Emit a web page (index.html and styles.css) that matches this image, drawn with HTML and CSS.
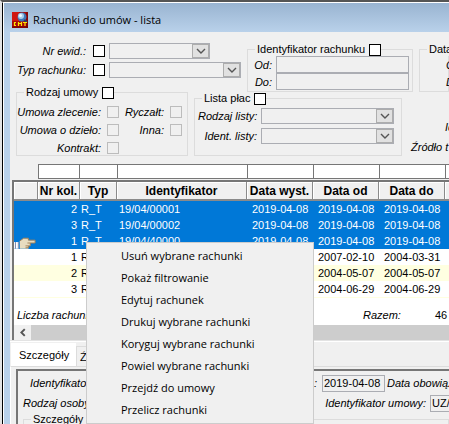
FILE: index.html
```html
<!DOCTYPE html>
<html lang="pl">
<head>
<meta charset="utf-8">
<title>Rachunki do umów - lista</title>
<link rel="stylesheet" href="styles.css">
</head>
<body>
<svg class="defs" width="0" height="0" aria-hidden="true">
  <symbol id="chevron" viewBox="0 0 10 6"><path d="M1 1l4 4 4-4" fill="none" stroke="#555" stroke-width="1.4"/></symbol>
</svg>
<div class="window">
  <header class="titlebar">
    <svg class="logo" viewBox="0 0 16 16" aria-hidden="true">
      <rect width="16" height="16" fill="#a80808"/>
      <path d="M0 0h7v9H0z" fill="#d01510"/>
      <path d="M0 15h16M15 0v16" stroke="#600" fill="none"/>
      <circle cx="10" cy="5" r="4.5" fill="#3f78b8"/>
      <circle cx="9" cy="4" r="3" fill="#a9cdec"/>
      <circle cx="8.500" cy="3.500" r="1.500" fill="#f2f9ff"/>
      <path d="M12 8l3 2" stroke="#28436e" stroke-width="2"/>
      <path d="M4 10.500H2.500v3H4M6.500 14v-4M9.500 14v-4M6.500 11.500h3M11 10.500h4M13 10.500V14" stroke="#ffe500" stroke-width="1.200" fill="none"/>
    </svg>
    <h1>Rachunki do umów - lista</h1>
  </header>
  <main class="content">
    <form class="filters">
      <div class="basic">
        <div class="line">
          <label for="nr">Nr ewid.:</label>
          <input type="checkbox" id="nr">
          <span class="combo combo-short"><select aria-label="Nr ewid." disabled><option></option></select><span class="drop"><svg><use href="#chevron"/></svg></span></span>
        </div>
        <div class="line">
          <label for="typ">Typ rachunku:</label>
          <input type="checkbox" id="typ">
          <span class="combo"><select aria-label="Typ rachunku" disabled><option></option></select><span class="drop"><svg><use href="#chevron"/></svg></span></span>
        </div>
      </div>
      <fieldset class="ident">
        <legend><label for="idr">Identyfikator rachunku</label><input type="checkbox" id="idr"></legend>
        <div class="pair"><label for="od">Od:</label><input type="text" id="od" disabled></div>
        <div class="pair"><label for="do">Do:</label><input type="text" id="do" disabled></div>
      </fieldset>
      <fieldset class="dates">
        <legend>Data</legend>
        <div class="pair"><label for="dod">Od:</label><input type="text" id="dod" disabled></div>
        <div class="pair"><label for="ddo">Do:</label><input type="text" id="ddo" disabled></div>
      </fieldset>
      <fieldset class="contract">
        <legend><label for="ru">Rodzaj umowy</label><input type="checkbox" id="ru"></legend>
        <div class="kinds">
          <label for="uz">Umowa zlecenie:</label><input type="checkbox" id="uz" disabled>
          <label for="ry">Ryczałt:</label><input type="checkbox" id="ry" disabled>
          <label for="ud">Umowa o dzieło:</label><input type="checkbox" id="ud" disabled>
          <label for="in">Inna:</label><input type="checkbox" id="in" disabled>
          <label for="ko">Kontrakt:</label><input type="checkbox" id="ko" disabled>
        </div>
      </fieldset>
      <fieldset class="payroll">
        <legend><label for="lp">Lista płac</label><input type="checkbox" id="lp"></legend>
        <div class="line"><label for="rl">Rodzaj listy:</label><span class="combo"><select id="rl" disabled><option></option></select><span class="drop"><svg><use href="#chevron"/></svg></span></span></div>
        <div class="line"><label for="il">Ident. listy:</label><span class="combo"><select id="il" disabled><option></option></select><span class="drop"><svg><use href="#chevron"/></svg></span></span></div>
      </fieldset>
      <div class="source">
        <span class="source-id">Id</span>
        <span>Źródło t</span>
      </div>
    </form>

    <div class="column-filters">
      <input type="text" aria-label="Filtr Nr kol."><input type="text" aria-label="Filtr Typ"><input type="text" aria-label="Filtr Identyfikator"><input type="text" aria-label="Filtr Data wyst."><input type="text" aria-label="Filtr Data od"><input type="text" aria-label="Filtr Data do"><input type="text" aria-label="Filtr">
    </div>
    <section class="list">
      <table>
        <colgroup><col class="c-mark"><col class="c-num"><col class="c-type"><col class="c-id"><col class="c-date"><col class="c-date"><col class="c-date"><col class="c-rest"></colgroup>
        <thead><tr><th></th><th>Nr kol.</th><th>Typ</th><th>Identyfikator</th><th>Data wyst.</th><th>Data od</th><th>Data do</th><th></th></tr></thead>
        <tbody>
          <tr class="selected"><td></td><td>2</td><td>R_T</td><td>19/04/00001</td><td>2019-04-08</td><td>2019-04-08</td><td>2019-04-08</td><td></td></tr>
          <tr class="selected"><td></td><td>3</td><td>R_T</td><td>19/04/00002</td><td>2019-04-08</td><td>2019-04-08</td><td>2019-04-08</td><td></td></tr>
          <tr class="selected"><td class="mark"><svg class="hand" viewBox="0 0 24 12" aria-hidden="true"><path d="M0 5h5v7H0z" fill="#fff"/><path d="M1.500 5v7M4.500 5v7" stroke="#7182a8"/><path d="M6 4l4-3h5v2h7v3h-5v3h-2v3H6z" fill="#e8dcc0"/><path d="M6 4l4-3h5v2h7v3h-8M17 6v3h-5M15 9v2h-3" fill="none" stroke="#a08058"/></svg></td><td>1</td><td>R_T</td><td>19/04/40000</td><td>2019-04-08</td><td>2019-04-08</td><td>2019-04-08</td><td></td></tr>
          <tr><td></td><td>1</td><td>R_T</td><td></td><td></td><td>2007-02-10</td><td>2004-03-31</td><td></td></tr>
          <tr class="alt"><td></td><td>2</td><td>R_T</td><td></td><td></td><td>2004-05-07</td><td>2004-05-07</td><td></td></tr>
          <tr><td></td><td>3</td><td>R_T</td><td></td><td></td><td>2004-06-29</td><td>2004-06-29</td><td></td></tr>
        </tbody>
      </table>
      <div class="summary"><em>Liczba rachunków:</em><em class="total">Razem:</em><span>46</span></div>
      <div class="scrollbar"><button type="button" aria-label="Przewiń w lewo"><svg viewBox="0 0 6 8"><path d="M5 1L2 4l3 3" fill="none" stroke="#555" stroke-width="1.700"/></svg></button><span class="thumb"></span></div>
    </section>

    <nav class="tabs"><button type="button" class="active">Szczegóły</button><button type="button">Źródło</button></nav>
    <section class="details">
      <div class="panel">
        <div class="detail-row first">
          <span class="caption">Identyfikator:</span>
          <label class="issued" for="dw">Data wyst.:</label>
          <input class="date" type="text" id="dw" value="2019-04-08">
          <span class="due">Data obowiązku</span>
        </div>
        <div class="detail-row">
          <span class="caption">Rodzaj osoby:</span>
          <label class="contract-id" for="iu">Identyfikator umowy:</label>
          <input class="number" type="text" id="iu" value="UZ/">
        </div>
        <fieldset class="more"><legend>Szczegóły rachunku</legend></fieldset>
      </div>
    </section>
  </main>
</div>
<menu class="context-menu">
  <li><button type="button">Usuń wybrane rachunki</button></li>
  <li><button type="button">Pokaż filtrowanie</button></li>
  <li><button type="button">Edytuj rachunek</button></li>
  <li><button type="button">Drukuj wybrane rachunki</button></li>
  <li><button type="button">Koryguj wybrane rachunki</button></li>
  <li><button type="button">Powiel wybrane rachunki</button></li>
  <li><button type="button">Przejdź do umowy</button></li>
  <li><button type="button">Przelicz rachunki</button></li>
</menu>
</body>
</html>
```
FILE: styles.css
```css
* { box-sizing: border-box; }
html { height: 100%; overflow: hidden; }
body {
  margin: 0;
  height: 100%;
  overflow: hidden;
  border-top: 2px solid #555;
  border-left: 2px solid #e4e4e4;
  background: #f0f0f0;
  color: #000;
  font: 11px/16px "Liberation Sans", Arial, sans-serif;
  white-space: nowrap;
}
input, select, button { font: inherit; color: inherit; margin: 0; padding: 0; border-radius: 0; }
button { border: 0; background: none; }
.defs { position: absolute; }

/* Window frame */
.window {
  display: flex;
  flex-direction: column;
  height: 100%;
  overflow: hidden;
  padding-left: 6px;
  border-left: 1px solid #000;
  border-top: 1px solid #fff;
  box-shadow: inset 1px 0 #fff;
  background: #b9d1ea;
}
.titlebar {
  display: flex;
  flex: none;
  align-items: center;
  gap: 5px;
  height: 29px;
  margin-left: -5px;
  padding: 5px 0 0 8px;
  background: linear-gradient(#99b4d1, #b9d1ea);
}
.logo { width: 16px; height: 16px; }
h1 { margin: 0; font: 11px/16px "Open Sans", "Noto Sans", sans-serif; }
.content { flex: 1; min-height: 0; margin-left: 1px; padding-top: 11px; background: #f0f0f0; overflow: hidden; }

/* Shared controls */
label, em { font-style: italic; }
input[type="checkbox"] {
  appearance: none;
  flex: none;
  width: 12px;
  height: 12px;
  border: 1px solid #000;
  background: #fff;
}
input[type="checkbox"]:disabled { border-color: #bcbcbc; background: transparent; }
.combo {
  display: flex;
  flex: 1;
  height: 16px;
  border: 1px solid #abadb3;
}
.combo select { appearance: none; flex: 1; min-width: 0; border: 0; background: transparent; }
.drop {
  display: grid;
  place-items: center;
  width: 17px;
  border: 1px solid #adadad;
  background: #e1e1e1;
}
.drop svg { width: 10px; height: 6px; }
.line { display: flex; align-items: center; }

/* Fieldsets */
fieldset { min-width: 0; margin: 0; padding: 0; border: 1px solid #dcdcdc; }
legend { display: flex; align-items: center; gap: 4px; height: 13px; margin-left: 7px; padding: 0 0 0 2px; line-height: 13px; }
legend label { font-style: normal; }

/* Filters */
.filters {
  display: grid;
  grid-template-columns: 178px 53px 160px 12px 1fr;
  grid-template-rows: 43px 6px 4px 60px;
  padding-left: 6px;
  overflow: hidden;
}
.basic { grid-area: 1 / 1 / 2 / 3; display: grid; gap: 3px; align-content: start; margin: 0 6px 0 -6px; }
.basic .line label { width: 76px; text-align: right; }
.basic .line input { margin: 0 4px 0 7px; }
.basic .combo-short { margin-right: 31px; }
.ident { grid-area: 1 / 3 / 3 / 5; margin-right: 6px; }
.dates { grid-area: 1 / 5 / 3 / 6; }
.pair { display: flex; align-items: center; gap: 4px; height: 17px; padding: 0 3px; }
.pair label { width: 21px; text-align: right; }
.pair input { flex: 1; min-width: 0; height: 17px; border: 1px solid #abadb3; background: transparent; }
.dates .pair label { width: auto; margin-left: 23px; }
.contract { grid-area: 2 / 1 / 5 / 2; margin-right: 6px; }
.kinds {
  display: grid;
  grid-template-columns: 84px 12px 39px 12px;
  grid-auto-rows: 18px;
  column-gap: 6px;
  align-items: center;
  justify-items: end;
  margin-top: 4px;
}
.payroll { grid-area: 3 / 2 / 5 / 4; margin-right: 5px; }
.payroll .line { gap: 4px; height: 16px; margin: 3px 7px 4px 3px; }
.payroll .line label { width: 59px; text-align: right; }
.source { grid-area: 4 / 4 / 5 / 6; display: grid; gap: 4px; align-content: end; padding: 0 0 1px 4px; font-style: italic; }
.source-id { margin-left: 34px; }

/* Column filter boxes */
.column-filters {
  display: grid;
  grid-template-columns: 42px 38px 130px 66px 66px 66px 120px;
  margin: 8px 0 0 28px;
}
.column-filters input { min-width: 0; height: 15px; border: 1px solid #767676; background: #fff; }
.column-filters input + input { margin-left: -1px; }

/* Table */
.list { margin: 1px 0 0 2px; border: solid #767676; border-width: 2px 0 0 2px; background: #fff; }
table { table-layout: fixed; width: 560px; border-collapse: separate; border-spacing: 0; }
.c-mark { width: 24px; }
.c-num { width: 42px; }
.c-type { width: 37px; }
.c-id { width: 130px; }
.c-date { width: 66px; }
th, td { padding: 0; overflow: hidden; }
th {
  height: 19px;
  border: solid #8a8a8a;
  border-width: 0 1px 2px 0;
  box-shadow: inset 1px 1px #fff;
  background: #f0f0f0;
  font: bold 12px/16px "Liberation Sans", Arial, sans-serif;
}
td { height: 16px; padding-left: 5px; line-height: 16px; }
td:nth-child(2) { padding: 0 3px 0 0; text-align: right; }
td:nth-child(3) { padding-left: 1px; }
td:nth-child(4) { padding-left: 2px; }
td.mark { padding: 0; }
.hand { display: block; width: 23px; height: 12px; margin-top: 4px; }
.selected { background: #0078d7; color: #fff; }
.alt { background: #ffffe1; }
.summary { display: flex; align-items: center; height: 28px; padding: 6px 0 0 3px; border-top: 1px solid #ffffe1; }
.summary em:first-child { width: 346px; }
.total { width: 72px; }
.scrollbar { display: flex; height: 15px; }
.scrollbar button { display: grid; place-items: center; width: 17px; background: #f0f0f0; }
.scrollbar svg { width: 7px; height: 9px; }
.thumb { flex: 1; background: #cdcdcd; }

/* Details */
.tabs { display: flex; align-items: flex-end; height: 26px; padding-left: 1px; border-top: 1px solid #e3e3e3; box-shadow: inset 0 1px #fff; }
.tabs button { height: 20px; padding: 0 7px; border: 1px solid #dcdcdc; border-bottom: 0; }
.tabs .active { width: 65px; height: 23px; background: #fff; border-color: #fff; }
.tabs button:last-child { padding-left: 3px; }
.details { padding: 2px 0 0 5px; border-top: 1px solid #dcdcdc; border-left: 1px solid #fff; }
.panel { padding: 2px 0 0 5px; border: solid #767676; border-width: 2px 0 0 2px; }
.detail-row { display: flex; align-items: center; height: 20px; }
.detail-row span { font-style: italic; }
.detail-row input { flex: none; height: 17px; padding-left: 1px; border: 1px solid #abadb3; background: transparent; }
.caption { flex: none; width: 233px; }
.first .caption { padding-left: 7px; }
.issued { flex: none; width: 61px; text-align: right; }
.date { width: 63px; margin: 0 2px 0 5px; }
.due { flex: none; }
.detail-row .contract-id { flex: none; width: 170px; text-align: right; }
.number { width: 90px; margin-left: 4px; }

/* Context menu */
.context-menu {
  position: absolute;
  left: 86px;
  top: 242px;
  width: 228px;
  margin: 0;
  padding: 2px 0;
  border: 1px solid #ccc;
  background: #f0f0f0;
  list-style: none;
  font: 11px/22px "Open Sans", "Noto Sans", sans-serif;
}
.context-menu button { display: block; width: 100%; height: 22px; padding-left: 34px; text-align: left; }
```
